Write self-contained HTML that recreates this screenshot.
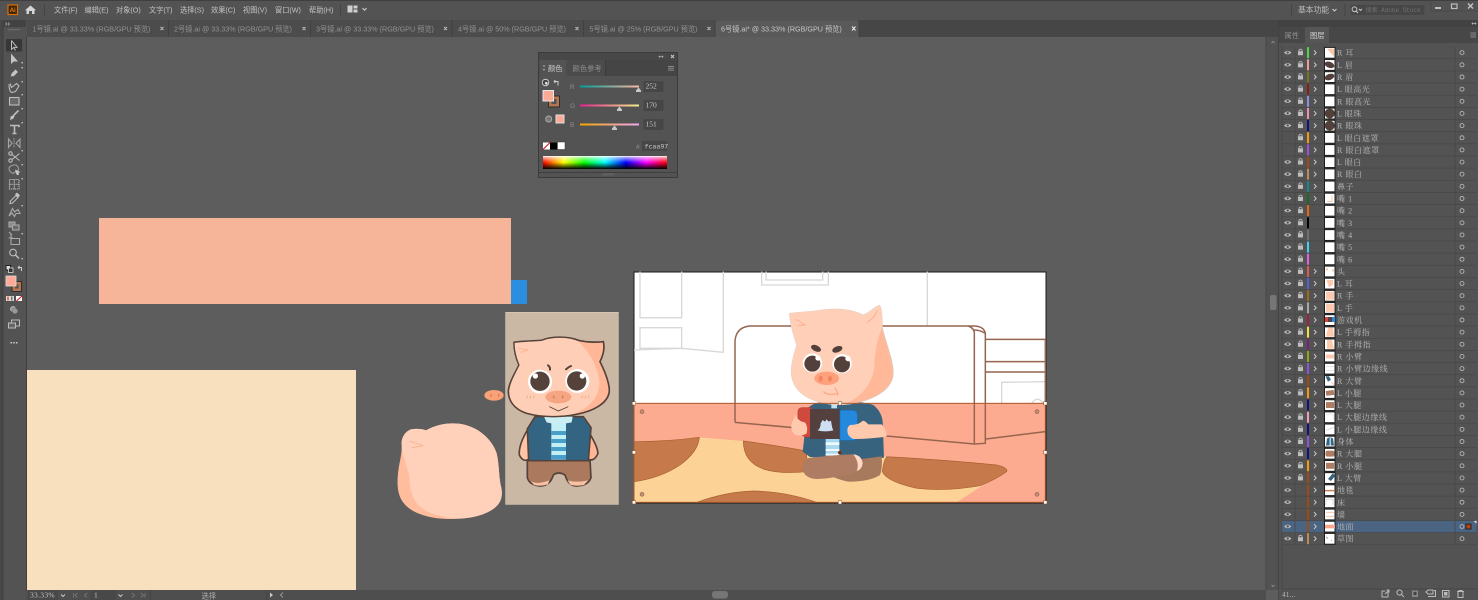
<!DOCTYPE html>
<html lang="zh"><head><meta charset="utf-8"><title>Illustrator</title>
<style>
html,body{margin:0;padding:0;width:1478px;height:600px;overflow:hidden;background:#5d5d5d}
svg{display:block;filter:blur(.3px)}
text{font-family:"Liberation Sans","Noto Sans CJK SC",sans-serif;fill:#b4b4b4;font-size:7.3px}
.m text{font-size:7.2px;fill:#c4c4c4}
.t text{font-size:7.2px;fill:#929292}
.l text{font-family:"Liberation Serif","Noto Serif CJK SC",serif;font-size:8px;fill:#b8b8b8;letter-spacing:.55px}
.ic{fill:none;stroke:#bcbcbc;stroke-width:1.1}
.f{fill:#c4c4c4;stroke:none}
</style></head><body>
<svg width="1478" height="600" viewBox="0 0 1478 600" xmlns="http://www.w3.org/2000/svg">
<defs>
<linearGradient id="gr"><stop offset="0" stop-color="#009c9c"/><stop offset="1" stop-color="#ffb8a0"/></linearGradient>
<linearGradient id="gg"><stop offset="0" stop-color="#e8208e"/><stop offset="1" stop-color="#f2f088"/></linearGradient>
<linearGradient id="gb"><stop offset="0" stop-color="#f5a500"/><stop offset="1" stop-color="#f0a8f4"/></linearGradient>
<linearGradient id="hue"><stop offset="0" stop-color="#f00"/><stop offset=".167" stop-color="#ff0"/><stop offset=".333" stop-color="#0f0"/><stop offset=".5" stop-color="#0ff"/><stop offset=".667" stop-color="#00f"/><stop offset=".833" stop-color="#f0f"/><stop offset="1" stop-color="#f00"/></linearGradient>
<linearGradient id="wb" x2="0" y2="1"><stop offset="0" stop-color="#fff"/><stop offset=".12" stop-color="#fff" stop-opacity=".6"/><stop offset=".5" stop-color="#fff" stop-opacity="0"/><stop offset=".5" stop-color="#000" stop-opacity="0"/><stop offset="1" stop-color="#000"/></linearGradient>
<g id="r"><path d="M1282 6.07H1476M1295 -6V6M1455 -6V6" stroke="#484848" stroke-width=".8" fill="none"/><circle cx="1462" cy="0" r="2" fill="none" stroke="#b5b5b5" stroke-width=".9"/></g>
<g id="e"><path d="M1284 0Q1287.7 -3.8 1291.4 0Q1287.7 3.4 1284 0Z" fill="#bdbdbd"/><circle cx="1287.7" cy="-.2" r="1.2" fill="#535353"/></g>
<g id="k"><rect x="1298" y="-1.5" width="5" height="4" fill="#bdbdbd"/><path d="M1299 -1.5V-2.6Q1300.5 -4.3 1302 -2.6V-1.5" fill="none" stroke="#bdbdbd" stroke-width=".9"/></g>
<path id="c" d="M1314 -2.3L1316.2 0L1314 2.3" fill="none" stroke="#c8c8c8" stroke-width="1"/>
<rect id="w" x="1324.5" y="-5.3" width="10.5" height="10.8" fill="#fff" stroke="#1c1c1c"/>
</defs>

<!-- base -->
<rect width="1478" height="600" fill="#5d5d5d"/>

<!-- artboard objects -->
<rect x="99" y="218" width="412" height="86" fill="#f6b599"/>
<rect x="511" y="280" width="16" height="24" fill="#2b8fe0"/>
<rect x="27" y="370" width="329" height="220" fill="#f8dfbe"/>

<!-- left pig group -->
<g transform="translate(390 305) scale(.33333)">
<rect x="347" y="22" width="338" height="576" fill="#cbb8a4" stroke="#d8cbbb" stroke-width="2"/>
<ellipse cx="312" cy="271" rx="29" ry="16" fill="#f9a177"/><ellipse cx="303" cy="271" rx="2.5" ry="5" fill="#d9825c"/><ellipse cx="326" cy="271" rx="2.5" ry="5" fill="#d9825c"/>
<path d="M35 420C33 395 50 372 72 372C85 371 98 372 108 376C140 358 175 353 205 356C260 362 305 400 320 445C328 480 326 510 332 540C340 570 335 590 315 608C285 632 235 643 180 642C120 642 65 625 42 595C20 570 20 530 26 490C30 465 36 445 35 420Z" fill="#ffbd9e"/>
<path d="M35 420C33 395 50 372 72 372C85 371 98 372 108 376C140 358 175 353 205 356C260 362 305 400 320 445C328 480 326 510 332 540C340 570 335 590 315 608C285 632 235 643 190 640C150 635 110 625 85 600C62 575 58 540 58 515C50 480 36 445 35 420Z" fill="#ffd1ba"/>
<path d="M57 408L100 422L66 428" fill="none" stroke="#fbb08c" stroke-width="2.5"/>
<!-- arms -->
<path d="M414 372Q385 420 388 450Q400 474 418 462L432 380Z" fill="#ffc3a6" stroke="#55423a" stroke-width="5"/>
<path d="M590 372Q622 420 624 445Q612 472 594 462L580 380Z" fill="#ffb596" stroke="#55423a" stroke-width="5"/>
<!-- pants -->
<path d="M412 465H600L603 518Q595 542 560 543Q535 543 525 510Q505 498 490 510Q480 543 450 543Q418 540 412 518Z" fill="#ab7a5e" stroke="#55423a" stroke-width="5"/>
<path d="M422 528Q440 540 478 526L474 538Q450 545 432 540ZM533 526Q560 534 594 526L582 540Q555 545 540 538Z" fill="#f9c1a4"/>
<!-- jacket -->
<path d="M412 372L435 335H580L603 368L595 467H416Z" fill="#336583" stroke="#55423a" stroke-width="5"/>
<rect x="484" y="345" width="44" height="119" fill="#c2eff6"/>
<path d="M484 378H528V390H484ZM484 402H528V414H484ZM484 426H528V438H484ZM484 450H528V463H484Z" fill="#4a9ec9"/>
<path d="M462 335H548L545 352L512 358L505 345L497 358L470 352Z" fill="#cbeef2"/>
<!-- head -->
<path d="M372 112C400 108 430 108 455 106C480 95 530 92 565 106C590 112 620 112 640 110C645 130 640 150 630 170C645 200 658 235 658 258C655 295 610 318 560 328C510 338 450 336 410 325C370 312 355 285 355 258C358 230 375 205 387 180C378 160 372 135 372 112Z" fill="#ffb797" stroke="#55423a" stroke-width="5"/>
<path d="M374 114C400 110 430 110 455 108C480 97 530 94 563 108C600 140 625 190 628 230C630 275 595 315 540 329C500 335 450 334 412 323C372 310 358 285 358 258C361 230 377 205 389 180C380 160 374 135 374 114Z" fill="#ffceb6"/>
<path d="M385 130L415 135L392 142" fill="none" stroke="#fbb08c" stroke-width="2.5"/>
<path d="M474 181Q481 186 480 194M543 183Q535 186 528 193" fill="none" stroke="#55423a" stroke-width="6" stroke-linecap="round"/>
<circle cx="450" cy="230" r="36" fill="#fff"/><circle cx="562" cy="228" r="36" fill="#fff"/>
<circle cx="450" cy="229" r="29" fill="#55423a"/><circle cx="560" cy="228" r="29" fill="#55423a"/>
<circle cx="436" cy="213" r="8" fill="#fff"/><circle cx="577" cy="213" r="8" fill="#fff"/>
<ellipse cx="505" cy="276" rx="39" ry="19" fill="#f6a583"/><ellipse cx="491" cy="276" rx="2.5" ry="5" fill="#d3805e"/><ellipse cx="518" cy="276" rx="2.5" ry="5" fill="#d3805e"/>
<path d="M478 305L505 318L535 305" fill="none" stroke="#55423a" stroke-width="2.5"/>
<path d="M413 272l-3 8M423 272l-3 8M433 272l-3 8M578 272l-3 8M588 272l-3 8M598 272l-3 8" stroke="#f29b78" stroke-width="2"/>
</g>

<!-- artboard scene -->
<rect x="634" y="272" width="412" height="231" fill="#fff" stroke="#1a1a1a" stroke-width="1"/>
<g transform="translate(630 265) scale(.33333)">
<g fill="none" stroke="#d8d8d8" stroke-width="4">
<path d="M30 20V158H155V20M280 20V262M12 255L155 250L280 262M30 188H155V250H30ZM395 20V60H595V20M408 20V45H578V20M892 20V182M1115 415V352L1245 350"/>
<path d="M1205 415Q1222 390 1240 415"/>
</g>
<rect x="12" y="415" width="1234" height="297" fill="#fdab90"/>
<path d="M12 600L208 517L340 528L520 555L770 575L1060 660L980 712H12Z" fill="#fdd296"/>
<g fill="#c67a4c" stroke="#a9602f" stroke-width="2">
<path d="M12 530Q110 530 208 517Q205 560 150 600Q90 640 12 650Z"/>
<path d="M340 528Q430 540 530 558L530 620Q450 628 400 612Q340 590 340 528Z"/>
<path d="M770 575Q950 585 1100 600Q1135 608 1130 620Q1095 645 1050 662Q950 680 860 670Q770 650 757 620Q760 590 770 575Z"/>
<path d="M200 712Q290 680 370 678Q470 680 560 712Z"/>
</g>
<g fill="none" stroke="#96654f" stroke-width="4.5">
<path d="M315 472V228Q318 188 358 183H1035Q1062 185 1066 205V535L1033 537L315 472"/>
<path d="M1015 183Q1033 190 1033 205V537M1033 195Q1050 195 1066 205"/>
<path d="M1066 223H1246M1066 290H1246M1066 321H1246M1246 223V415M1068 522L1246 500"/>
</g>
<!-- pig: body -->
<path d="M535 428Q560 405 610 412Q690 405 730 420Q755 440 758 470L762 578L700 586L540 576L518 560L525 500Z" fill="#38637f"/>
<rect x="604" y="418" width="17" height="12" fill="#bfe3f0"/>
<rect x="587" y="520" width="41" height="52" fill="#a9d9ee"/><path d="M587 532H628V540H587ZM587 552H628V558H587ZM587 566H628V572H587Z" fill="#f1fafd"/>
<!-- legs -->
<path d="M695 582L755 574Q758 610 750 630Q720 650 655 650Q630 645 610 636L680 618Z" fill="#a7795d"/>
<path d="M530 580Q600 570 665 568Q695 570 698 595Q695 615 675 622Q620 640 560 642Q525 640 518 615Q516 595 530 580Z" fill="#ad7c63"/>
<path d="M670 568Q695 570 698 595Q695 615 680 618Q690 595 670 568Z" fill="#ffd9c6"/>
<circle cx="629" cy="563" r="5" fill="#7a2a0a"/>
<!-- head -->
<path d="M478 145C520 140 540 140 560 137C610 128 660 130 700 150C715 145 735 125 748 120C755 125 757 160 757 185C765 230 790 280 790 325C788 370 740 405 660 417C600 425 530 410 500 370C478 340 478 310 500 240C490 210 480 170 478 145Z" fill="#ffb998" stroke="#d8cfca" stroke-width="2"/>
<path d="M478 145C520 140 540 140 560 137C610 128 660 130 700 150C715 145 735 125 748 120C755 125 757 160 757 185C745 215 735 250 733 300C730 350 700 395 640 419C600 422 530 410 500 370C478 340 478 310 500 240C490 210 480 170 478 145Z" fill="#ffcfb8"/>
<path d="M498 163L525 180L505 181M742 135Q735 160 710 172" fill="none" stroke="#ffa988" stroke-width="2.5"/>
<ellipse cx="558" cy="250" rx="16" ry="9" fill="#53403a" transform="rotate(25 558 250)"/><ellipse cx="622" cy="253" rx="16" ry="9" fill="#53403a" transform="rotate(-20 622 253)"/>
<circle cx="547" cy="294" r="29" fill="#fff"/><circle cx="636" cy="296" r="29" fill="#fff"/>
<circle cx="547" cy="296" r="24" fill="#53403a"/><circle cx="636" cy="298" r="24" fill="#53403a"/>
<circle cx="564" cy="279" r="8" fill="#fff"/><circle cx="654" cy="281" r="8" fill="#fff"/>
<ellipse cx="590" cy="340" rx="37" ry="20" fill="#ffa07d"/><ellipse cx="572" cy="341" rx="6" ry="9" fill="#ee8660"/><ellipse cx="600" cy="341" rx="6" ry="9" fill="#ee8660"/>
<path d="M580 380Q600 395 625 384M614 368Q624 380 623 392" fill="none" stroke="#ffa07a" stroke-width="3"/>
<!-- switch -->
<path d="M515 428H545V516H530Q506 510 504 490V440Q504 430 515 428Z" fill="#d0493e" stroke="#b03c33" stroke-width="2"/>
<rect x="540" y="432" width="92" height="90" fill="#54403e"/>
<path d="M630 436H670Q682 438 682 450V510Q680 525 668 526H630Z" fill="#2488dc" stroke="#1c6fb8" stroke-width="2"/>
<path d="M563 496Q572 490 572 475L578 465L585 470L590 463L596 470L603 467Q606 490 610 496Q585 502 563 496Z" fill="#cfe0f2"/>
<!-- hands -->
<path d="M497 450Q505 470 525 472Q535 485 530 505Q515 515 495 510Q480 495 485 475Z" fill="#ffc9ae"/>
<path d="M660 480Q685 480 695 470Q700 462 715 478L755 478Q770 495 770 515Q720 522 670 522Q652 515 652 497Q652 485 660 480Z" fill="#ffc9ae"/>
<!-- selection -->
<rect x="12" y="415" width="1234" height="297" fill="none" stroke="#a95a2a" stroke-width="3"/>
<g fill="#c18c72" stroke="#8a5a3e" stroke-width="1.6"><circle cx="36" cy="440" r="6"/><circle cx="1221" cy="440" r="6"/><circle cx="36" cy="688" r="6"/><circle cx="1221" cy="688" r="6"/></g>
<g fill="#fff" stroke="#8a4a20" stroke-width="1.5"><rect x="7" y="410" width="10" height="10"/><rect x="625" y="410" width="10" height="10"/><rect x="1241" y="410" width="10" height="10"/><rect x="7" y="557" width="10" height="10"/><rect x="1241" y="557" width="10" height="10"/><rect x="7" y="707" width="10" height="10"/><rect x="625" y="707" width="10" height="10"/><rect x="1241" y="707" width="10" height="10"/></g>
</g>

<!-- top chrome -->
<rect width="1478" height="20" fill="#535353"/><rect width="1478" height=".8" fill="#3a3a3a"/>
<rect x="8" y="5" width="9.5" height="9.5" fill="#3a2408" stroke="#d9700a" stroke-width="1.2"/>
<text x="9.7" y="12.2" style="font-size:6px;fill:#e8830e;font-weight:bold">Ai</text>
<path d="M30.5 5.5L36 10.3H34.5V14H32V11H29V14H26.5V10.3H25Z" fill="#d6d6d6"/>
<path d="M44.5 4V16" stroke="#454545"/>
<g class="m"><text x="54" y="12.3">文件(F)</text><text x="84.5" y="12.3">编辑(E)</text><text x="116" y="12.3">对象(O)</text><text x="149" y="12.3">文字(T)</text><text x="180" y="12.3">选择(S)</text><text x="211" y="12.3">效果(C)</text><text x="243" y="12.3">视图(V)</text><text x="275" y="12.3">窗口(W)</text><text x="309" y="12.3">帮助(H)</text></g>
<path d="M340.5 4V16" stroke="#454545"/>
<path d="M347.5 5.5h5v7h-5zM353.5 5.5h4v3h-4zM353.5 9.5h4v3h-4z" fill="#cfcfcf"/>
<path d="M362.5 8.2L364.5 10.2L366.5 8.2" fill="none" stroke="#c8c8c8" stroke-width="1.1"/>
<!-- right top -->
<path d="M1291.5 4V16M1345 4V16" stroke="#454545"/>
<text x="1298" y="12.3" style="fill:#bcbcbc;font-size:7.8px">基本功能</text>
<path d="M1332.5 9L1334.5 11L1336.5 9" fill="none" stroke="#c8c8c8" stroke-width="1.1"/>
<rect x="1350.5" y="5" width="74" height="10" rx="1" fill="#474747"/>
<circle cx="1354.5" cy="9.3" r="2.4" fill="none" stroke="#c8c8c8"/><path d="M1356.2 11L1358 13M1359 9L1360.5 10.5L1362 9" fill="none" stroke="#c8c8c8"/>
<text x="1365.5" y="11.8" style="font-family:'Liberation Mono','Noto Sans CJK SC',monospace;font-size:6px;fill:#707070">搜索 Adobe Stock</text>
<path d="M1431 0V11H1478" fill="none" stroke="#484848"/>
<rect x="1435" y="7" width="6" height="2" fill="#bdbdbd"/>
<rect x="1451.5" y="4" width="5.5" height="4.5" fill="none" stroke="#bdbdbd" stroke-width="1.2"/>
<path d="M1468 3.5L1473 8.5M1473 3.5L1468 8.5" stroke="#c8c8c8" stroke-width="1.3"/>

<!-- tab bar -->
<rect y="20" width="1478" height="17" fill="#464646"/>
<rect x="27" y="20" width="832" height="17" fill="#4c4c4c"/>
<rect x="715" y="20.5" width="144" height="16.5" fill="#5a5a5a"/>
<path d="M168.5 20V37M310.5 20V37M452 20V37M583.5 20V37M715 20V37M859 20V37" stroke="#3f3f3f" stroke-width=".8"/>
<g class="t"><text x="32.5" y="31.5">1号镜.ai @ 33.33% (RGB/GPU 预览)</text><text x="174" y="31.5">2号镜.ai @ 33.33% (RGB/GPU 预览)</text><text x="316" y="31.5">3号镜.ai @ 33.33% (RGB/GPU 预览)</text><text x="458" y="31.5">4号镜.ai @ 50% (RGB/GPU 预览)</text><text x="589.5" y="31.5">5号镜.ai @ 25% (RGB/GPU 预览)</text><text x="721" y="31.5" style="fill:#c8c8c8">6号镜.ai* @ 33.33% (RGB/GPU 预览)</text></g>
<g stroke="#bdbdbd" stroke-width="1"><path d="M160.5 27L163.5 30M163.5 27L160.5 30M302.5 27L305.5 30M305.5 27L302.5 30M444 27L447 30M447 27L444 30M575.5 27L578.5 30M578.5 27L575.5 30M707.5 27L710.5 30M710.5 27L707.5 30"/><path d="M852 26.5L855.5 30.5M855.5 26.5L852 30.5" stroke="#eee"/></g>

<!-- left toolbar -->
<rect y="20" width="27" height="580" fill="#535353"/>
<rect x="0" y="20" width="2.6" height="580" fill="#484848"/><rect x="2.6" y="20" width=".8" height="580" fill="#3c3c3c"/><rect x="26" y="37" width="1" height="553" fill="#3f3f3f"/>
<rect x="3.4" y="20" width="22.6" height="7" fill="#424242"/>
<path d="M5.5 22.5L7 24L5.5 25.5M8 22.5L9.5 24L8 25.5" stroke="#bbb" fill="none" stroke-width=".7"/>
<rect x="8" y="29" width="12" height="1.2" fill="#6a6a6a"/>
<rect x="6" y="39" width="16" height="12.5" rx="1" fill="#373737"/>
<g class="ic">
<path d="M11.5 40.5V49.5L13.8 47.4L15.5 50.5M13.8 47.4H17L11.5 40.5" stroke-width="1"/>
<path class="f" d="M11 53.5V64L13.8 61.5H18Z"/>
<path d="M10.5 78L11.5 73.5L15.5 69.5L18 72L14 76Z" class="f"/><path d="M10 78.5L12.5 76" stroke="#535353"/>
<path d="M9 84Q9 91 11.5 92.5L15.5 91.5L19 86L16.5 83.5L11.5 87.5Q10.5 86 10.5 83.5" />
<rect x="9.5" y="97.5" width="9.5" height="7.5" fill="#6a6a6a" stroke="#bcbcbc"/>
<path d="M18.5 110.5L13.5 115.5" stroke-width="1.6"/><path class="f" d="M10 120L10.8 116.3L13.5 115.3L14.5 116.5L13.2 118.8Z"/>
<path d="M10 125.5H19V127.3M14.5 125.5V133.5M12.5 133.5H16.5" stroke-width="1.6"/>
<path d="M8.5 139V147.5L12 143.2ZM20 139V147.5L16 143.2Z" stroke="#a5a5a5"/><path d="M14 138.5V148" stroke-dasharray="1.3 1" stroke="#a5a5a5"/>
<circle cx="10.5" cy="153.5" r="1.7"/><circle cx="10.5" cy="160.5" r="1.7"/><path d="M12 154.5L19.5 160.5M12 159.5L19.5 153.5"/>
<path d="M9 168Q11 164.5 16 165Q19 167 18.5 170L13 173.5Q9 172 9 168Z" stroke="#999"/><path class="f" d="M15 169.5L20.5 172L18.5 173L19 175L17 175L16 173.5Z"/>
<rect x="9.5" y="179.5" width="9.5" height="9.5" stroke-dasharray="1.2 .8"/><path d="M9.5 184.3H19M14.3 179.5V189" stroke-dasharray="1.2 .8"/>
<path d="M10 203.5L10.5 201L16 195.5L18 197.5L12.5 203Z"/><path class="f" d="M15 194.5L17 192.5L20 195.5L18 197.5Z"/>
<path d="M9 216L12.5 208.5L14.5 212L18 209.5L20 213.5L16 213.5L14.5 216.5L12 213Z" stroke="#aaa"/>
<rect x="9" y="222" width="6" height="5" fill="#888" stroke="#aaa"/><rect x="12.5" y="225" width="6.5" height="5" fill="#6a6a6a" stroke="#aaa"/>
<path d="M11 233.5V244.5H19.5V238.5H11M8.5 238H13M12 235L9 232" stroke="#aaa"/>
<circle cx="13" cy="252.5" r="3.3"/><path d="M15.5 255L19 258.5" stroke-width="1.5"/>
</g>
<g fill="#c8c8c8"><path d="M21.5 67h1.4v1.4h-1.4zM21.5 81h1.4v1.4h-1.4zM21.5 94h1.4v1.4h-1.4zM21.5 108h1.4v1.4h-1.4zM21.5 122h1.4v1.4h-1.4zM21.5 150h1.4v1.4h-1.4zM21.5 164h1.4v1.4h-1.4zM21.5 178h1.4v1.4h-1.4zM21.5 205h1.4v1.4h-1.4zM21.5 233h1.4v1.4h-1.4zM21.5 258h1.4v1.4h-1.4zM21.5 62h1.4v1.4h-1.4z"/></g>
<rect x="6" y="265.5" width="4.5" height="4.5" fill="#ddd" stroke="#222"/><rect x="8.5" y="268" width="4.5" height="4.5" fill="#333" stroke="#ddd" stroke-width=".8"/>
<path d="M18 267.5H21.5V271M18 267.5L19.5 266M18 267.5L19.5 269" fill="none" stroke="#ccc"/>
<rect x="11.5" y="281" width="10.5" height="11" fill="#2f2f2f"/><rect x="12.5" y="282" width="8.5" height="9" fill="#b5754f"/><rect x="15" y="284.5" width="3.5" height="4" fill="#535353"/>
<rect x="6" y="276" width="10" height="10" fill="#fdaa97" stroke="#ddd" stroke-width=".8"/>
<rect x="6" y="296" width="8" height="5" fill="#d9d9d9"/><path d="M7 296.5h2v4H7z" fill="#e27b5a"/><path d="M11 296.5h1.5v4H11z" fill="#777"/>
<rect x="16" y="296" width="6" height="5" fill="#fff"/><path d="M16.5 301L22 296" stroke="#e01010"/>
<circle cx="13" cy="309" r="2.6" fill="#999" stroke="#ddd" stroke-width=".5"/><circle cx="15" cy="311" r="2.6" fill="#999" stroke="#777" stroke-width=".5"/>
<rect x="11.5" y="320" width="8" height="6" fill="none" stroke="#bbb"/><rect x="8.5" y="323" width="7" height="5" fill="#666" stroke="#bbb"/>
<path d="M10.5 342h1.5v1.5h-1.5zM13.2 342h1.5v1.5h-1.5zM15.9 342h1.5v1.5h-1.5z" fill="#ccc"/>

<!-- color panel -->
<rect x="538.5" y="52.5" width="139" height="125" fill="#535353" stroke="#3b3b3b"/>
<rect x="539" y="53" width="138" height="7" fill="#484848"/>
<rect x="539" y="60" width="138" height="16" fill="#454545"/>
<rect x="539.3" y="60" width="27.3" height="16" fill="#535353"/>
<rect x="567" y="60" width="38" height="16" fill="#4b4b4b"/>
<path d="M605.5 60V76" stroke="#3e3e3e"/>
<path d="M659 56.7H663M659.8 55.7L659 56.7L659.8 57.7M662.2 55.7L663 56.7L662.2 57.7" fill="none" stroke="#bbb" stroke-width=".7"/>
<path d="M671 55L674 58M674 55L671 58" stroke="#ccc"/>
<path d="M543 66.5L544 65.5L545 66.5M543 69L544 70L545 69" fill="none" stroke="#bbb" stroke-width=".7"/>
<text x="548" y="71" style="fill:#d0d0d0">颜色</text><text x="572.5" y="71" style="fill:#8e8e8e">颜色参考</text>
<path d="M668 66.5H674M668 68.3H674M668 70.1H674" stroke="#8a8a8a"/>
<circle cx="545.5" cy="82.5" r="3.3" fill="#444" stroke="#ddd" stroke-width=".8"/><circle cx="546.3" cy="83.3" r="1.4" fill="#ddd"/>
<path d="M554 81.5H558V85.5M554 81.5L555.4 80M554 81.5L555.4 83" fill="none" stroke="#ccc"/>
<rect x="548.5" y="96" width="11" height="11" fill="#b5754f" stroke="#2f2f2f"/><rect x="551.5" y="99" width="5" height="5" fill="#535353"/>
<rect x="543" y="90.5" width="10.5" height="10.5" fill="#fdaa97" stroke="#e8e8e8"/>
<circle cx="548.7" cy="119" r="3" fill="#777" stroke="#aaa"/>
<rect x="556" y="115" width="8" height="8" fill="#fdaa97" stroke="#e0e0e0"/>
<text x="570" y="89" style="fill:#8f8f8f;font-size:6.5px">R</text><text x="570" y="108" style="fill:#8f8f8f;font-size:6.5px">G</text><text x="570" y="127" style="fill:#8f8f8f;font-size:6.5px">B</text>
<rect x="580" y="85.5" width="59" height="2" fill="url(#gr)"/><rect x="580" y="104.5" width="59" height="2" fill="url(#gg)"/><rect x="580" y="123.5" width="59" height="2" fill="url(#gb)"/>
<path d="M638.5 87.5L641 90.5V92H636V90.5ZM619.5 106.5L622 109.5V111H617V109.5ZM614.5 125.5L617 128.5V130H612V128.5Z" fill="#c8c8c8"/>
<rect x="643.5" y="81" width="20" height="11" rx="1" fill="#464646"/><rect x="643.5" y="100" width="20" height="11" rx="1" fill="#464646"/><rect x="643.5" y="119" width="20" height="11" rx="1" fill="#464646"/>
<text x="645.5" y="88.5" style="font-family:'Liberation Serif',serif;font-size:7.5px;fill:#c8c8c8">252</text><text x="645.5" y="107.5" style="font-family:'Liberation Serif',serif;font-size:7.5px;fill:#c8c8c8">170</text><text x="645.5" y="126.5" style="font-family:'Liberation Serif',serif;font-size:7.5px;fill:#c8c8c8">151</text>
<text x="636" y="149" style="font-size:6.5px;fill:#999">#</text>
<rect x="642" y="141" width="25" height="10" rx="1" fill="#464646"/>
<text x="644.5" y="148.5" style="font-family:'Liberation Mono',monospace;font-size:6.6px;fill:#c8c8c8">fcaa97</text>
<rect x="543" y="142.5" width="7" height="7" fill="#fff"/><path d="M543 149.5L550 142.5" stroke="#e01010" stroke-width="1.1"/>
<rect x="550" y="142.5" width="7" height="7" fill="#000"/><rect x="557.5" y="142" width="7.5" height="7.5" fill="#fff" stroke="#333" stroke-width=".5"/>
<rect x="543" y="156" width="124" height="13" fill="url(#hue)"/><rect x="543" y="156" width="124" height="13" fill="url(#wb)"/>
<path d="M539 172.5H677" stroke="#3f3f3f"/><rect x="602" y="173" width="12" height="2.5" fill="#5f5f5f"/>

<!-- right dock scrollbar region -->
<rect x="1266" y="37" width="12" height="553" fill="#525252"/>
<path d="M1266 37V590" stroke="#484848"/>
<rect x="1270" y="295" width="6.5" height="15" rx="2" fill="#767676"/>
<path d="M1271.5 43L1273 41.5L1274.5 43M1271.5 585L1273 586.5L1274.5 585" fill="none" stroke="#999" stroke-width=".8"/>

<!-- right panel -->
<rect x="1278" y="20" width="200" height="580" fill="#535353"/><rect x="1278" y="20" width=".8" height="580" fill="#3e3e3e"/>
<rect x="1278.5" y="20" width="199.5" height="7" fill="#424242"/>
<rect x="1278.5" y="27" width="199.5" height="16" fill="#474747"/>
<rect x="1305" y="27" width="24" height="16" fill="#565656"/>
<text x="1284.5" y="38" style="fill:#8e8e8e">属性</text><text x="1310" y="38" style="fill:#d0d0d0">图层</text>
<path d="M1472 23.5H1476M1472.7 22.5L1472 23.5L1472.7 24.5M1475.3 22.5L1476 23.5L1475.3 24.5" fill="none" stroke="#bbb" stroke-width=".7"/>
<path d="M1470.5 33H1476M1470.5 35H1476M1470.5 37H1476" stroke="#8a8a8a"/>
<path d="M1282 46V590" stroke="#474747"/>
<rect x="1282" y="520.6" width="194.5" height="12" fill="#4a6482"/>
<path d="M1473.5 520.8H1476.5V523.8Z" fill="#e6e6e6"/>

<g class="l">
<g transform="translate(0 52.7)"><use href="#r"/><use href="#e"/><use href="#k"/><rect x="1307" y="-5.5" width="2" height="11" fill="#4bd94b"/><use href="#c"/><use href="#w"/><path d="M1327 -4H1334V4Z" fill="#fbc5a6"/><text x="1337" y="3">R 耳</text></g>
<g transform="translate(0 64.85)"><use href="#r"/><use href="#e"/><use href="#k"/><rect x="1307" y="-5.5" width="2" height="11" fill="#f09a9a"/><use href="#c"/><use href="#w"/><ellipse cx="1329.5" cy="0" rx="5" ry="3" fill="#53403a" transform="rotate(20 1329.5 0)"/><text x="1337" y="3">L 眉</text></g>
<g transform="translate(0 77)"><use href="#r"/><use href="#e"/><use href="#k"/><rect x="1307" y="-5.5" width="2" height="11" fill="#7a7420"/><use href="#c"/><use href="#w"/><ellipse cx="1329.5" cy="0" rx="5" ry="3" fill="#53403a" transform="rotate(-20 1329.5 0)"/><text x="1337" y="3">R 眉</text></g>
<g transform="translate(0 89.15)"><use href="#r"/><use href="#e"/><use href="#k"/><rect x="1307" y="-5.5" width="2" height="11" fill="#8e1a10"/><use href="#c"/><use href="#w"/><text x="1337" y="3">L 眼高光</text></g>
<g transform="translate(0 101.3)"><use href="#r"/><use href="#e"/><use href="#k"/><rect x="1307" y="-5.5" width="2" height="11" fill="#8f8fe0"/><use href="#c"/><use href="#w"/><text x="1337" y="3">R 眼高光</text></g>
<g transform="translate(0 113.45)"><use href="#r"/><use href="#e"/><use href="#k"/><rect x="1307" y="-5.5" width="2" height="11" fill="#f090b0"/><use href="#c"/><use href="#w"/><circle cx="1329.7" cy="0" r="5" fill="#53403a"/><text x="1337" y="3">L 眼珠</text></g>
<g transform="translate(0 125.6)"><use href="#r"/><use href="#e"/><use href="#k"/><rect x="1307" y="-5.5" width="2" height="11" fill="#10107e"/><use href="#c"/><use href="#w"/><circle cx="1329.7" cy="0" r="5" fill="#53403a"/><text x="1337" y="3">R 眼珠</text></g>
<g transform="translate(0 137.75)"><use href="#r"/><use href="#k"/><rect x="1307" y="-5.5" width="2" height="11" fill="#f39a0e"/><use href="#c"/><use href="#w"/><text x="1337" y="3">L 眼白遮罩</text></g>
<g transform="translate(0 149.9)"><use href="#r"/><use href="#k"/><rect x="1307" y="-5.5" width="2" height="11" fill="#9b50e0"/><use href="#c"/><use href="#w"/><text x="1337" y="3">R 眼白遮罩</text></g>
<g transform="translate(0 162.05)"><use href="#r"/><use href="#e"/><use href="#k"/><rect x="1307" y="-5.5" width="2" height="11" fill="#a04a12"/><use href="#c"/><use href="#w"/><text x="1337" y="3">L 眼白</text></g>
<g transform="translate(0 174.2)"><use href="#r"/><use href="#e"/><use href="#k"/><rect x="1307" y="-5.5" width="2" height="11" fill="#b98c5a"/><use href="#c"/><use href="#w"/><text x="1337" y="3">R 眼白</text></g>
<g transform="translate(0 186.35)"><use href="#r"/><use href="#e"/><use href="#k"/><rect x="1307" y="-5.5" width="2" height="11" fill="#108a90"/><use href="#c"/><use href="#w"/><text x="1337" y="3">鼻子</text></g>
<g transform="translate(0 198.5)"><use href="#r"/><use href="#e"/><use href="#k"/><rect x="1307" y="-5.5" width="2" height="11" fill="#1a6a20"/><use href="#c"/><use href="#w"/><path d="M1327 3H1332V-3" fill="none" stroke="#fbc5a6"/><text x="1337" y="3">嘴 1</text></g>
<g transform="translate(0 210.65)"><use href="#r"/><use href="#e"/><use href="#k"/><rect x="1307" y="-5.5" width="2" height="11" fill="#e66a10"/><use href="#w"/><text x="1337" y="3">嘴 2</text></g>
<g transform="translate(0 222.8)"><use href="#r"/><use href="#e"/><use href="#k"/><rect x="1307" y="-5.5" width="2" height="11" fill="#000"/><use href="#w"/><text x="1337" y="3">嘴 3</text></g>
<g transform="translate(0 234.95)"><use href="#r"/><use href="#e"/><use href="#k"/><rect x="1307" y="-5.5" width="2" height="11" fill="#707070"/><use href="#w"/><text x="1337" y="3">嘴 4</text></g>
<g transform="translate(0 247.1)"><use href="#r"/><use href="#e"/><use href="#k"/><rect x="1307" y="-5.5" width="2" height="11" fill="#40d0f0"/><use href="#w"/><text x="1337" y="3">嘴 5</text></g>
<g transform="translate(0 259.25)"><use href="#r"/><use href="#e"/><use href="#k"/><rect x="1307" y="-5.5" width="2" height="11" fill="#e060e0"/><use href="#w"/><text x="1337" y="3">嘴 6</text></g>
<g transform="translate(0 271.4)"><use href="#r"/><use href="#e"/><use href="#k"/><rect x="1307" y="-5.5" width="2" height="11" fill="#e05a4a"/><use href="#c"/><use href="#w"/><path d="M1326 -3h2v2h-2zM1332 -2h2v2h-2z" fill="#fbc5a6"/><text x="1337" y="3">头</text></g>
<g transform="translate(0 283.55)"><use href="#r"/><use href="#e"/><use href="#k"/><rect x="1307" y="-5.5" width="2" height="11" fill="#5060e0"/><use href="#c"/><use href="#w"/><path d="M1326.5 -3.5H1333V1L1329 4Z" fill="#fdc9ae"/><text x="1337" y="3">L 耳</text></g>
<g transform="translate(0 295.7)"><use href="#r"/><use href="#e"/><use href="#k"/><rect x="1307" y="-5.5" width="2" height="11" fill="#a06a10"/><use href="#c"/><use href="#w"/><rect x="1326" y="-4" width="8" height="8" fill="#fdc9ae"/><text x="1337" y="3">R 手</text></g>
<g transform="translate(0 307.85)"><use href="#r"/><use href="#e"/><use href="#k"/><rect x="1307" y="-5.5" width="2" height="11" fill="#a8a8a8"/><use href="#c"/><use href="#w"/><rect x="1326" y="-4" width="8" height="8" fill="#fdc9ae"/><text x="1337" y="3">L 手</text></g>
<g transform="translate(0 320)"><use href="#r"/><use href="#e"/><use href="#k"/><rect x="1307" y="-5.5" width="2" height="11" fill="#a02040"/><use href="#c"/><use href="#w"/><rect x="1325" y="-3" width="3" height="5" fill="#d0493e"/><rect x="1328" y="-3" width="4" height="5" fill="#54403e"/><rect x="1332" y="-3" width="3" height="5" fill="#2488dc"/><text x="1337" y="3">游戏机</text></g>
<g transform="translate(0 332.15)"><use href="#r"/><use href="#e"/><use href="#k"/><rect x="1307" y="-5.5" width="2" height="11" fill="#f0e040"/><use href="#c"/><use href="#w"/><path d="M1328 -4.5H1333L1334 4.5H1326Z" fill="#fdc9ae"/><text x="1337" y="3">L 手拇指</text></g>
<g transform="translate(0 344.3)"><use href="#r"/><use href="#e"/><use href="#k"/><rect x="1307" y="-5.5" width="2" height="11" fill="#7a1f80"/><use href="#c"/><use href="#w"/><path d="M1327 -4.5H1332L1334 4.5H1327Z" fill="#fdc9ae"/><text x="1337" y="3">R 手拇指</text></g>
<g transform="translate(0 356.45)"><use href="#r"/><use href="#e"/><use href="#k"/><rect x="1307" y="-5.5" width="2" height="11" fill="#8aaa10"/><use href="#c"/><use href="#w"/><rect x="1326" y="-2" width="8" height="4" fill="#fdc9ae"/><text x="1337" y="3">R 小臂</text></g>
<g transform="translate(0 368.6)"><use href="#r"/><use href="#e"/><use href="#k"/><rect x="1307" y="-5.5" width="2" height="11" fill="#9050e0"/><use href="#c"/><use href="#w"/><path d="M1326 -2H1334M1326 2H1334" stroke="#e8d8d0" stroke-width=".7"/><text x="1337" y="3">R 小臂边缘线</text></g>
<g transform="translate(0 380.75)"><use href="#r"/><use href="#e"/><use href="#k"/><rect x="1307" y="-5.5" width="2" height="11" fill="#a04a12"/><use href="#c"/><use href="#w"/><path d="M1325.5 -4.5H1329L1331 -1L1328 1Z" fill="#38637f"/><path d="M1331 1L1334 4" stroke="#fdc9ae"/><text x="1337" y="3">R 大臂</text></g>
<g transform="translate(0 392.9)"><use href="#r"/><use href="#e"/><use href="#k"/><rect x="1307" y="-5.5" width="2" height="11" fill="#f39a0e"/><use href="#c"/><use href="#w"/><rect x="1326" y="-2.5" width="8" height="5" fill="#ad7c63" transform="rotate(-8 1330 0)"/><text x="1337" y="3">L 小腿</text></g>
<g transform="translate(0 405.05)"><use href="#r"/><use href="#e"/><use href="#k"/><rect x="1307" y="-5.5" width="2" height="11" fill="#10107e"/><use href="#c"/><use href="#w"/><rect x="1326" y="-3" width="8" height="6" fill="#ad7c63"/><text x="1337" y="3">L 大腿</text></g>
<g transform="translate(0 417.2)"><use href="#r"/><use href="#e"/><use href="#k"/><rect x="1307" y="-5.5" width="2" height="11" fill="#f29bc0"/><use href="#c"/><use href="#w"/><path d="M1326.5 -3H1333L1334 3" fill="none" stroke="#ddd" stroke-width=".7"/><text x="1337" y="3">L 大腿边缘线</text></g>
<g transform="translate(0 429.35)"><use href="#r"/><use href="#e"/><use href="#k"/><rect x="1307" y="-5.5" width="2" height="11" fill="#10107e"/><use href="#c"/><use href="#w"/><path d="M1326 1L1334 -2" fill="none" stroke="#ccc" stroke-width=".7"/><text x="1337" y="3">L 小腿边缘线</text></g>
<g transform="translate(0 441.5)"><use href="#r"/><use href="#e"/><use href="#k"/><rect x="1307" y="-5.5" width="2" height="11" fill="#9050e0"/><use href="#c"/><use href="#w"/><path d="M1326 4L1327 -3L1330 -4.5L1333 -3L1334 4Z" fill="#38637f"/><rect x="1329.5" y="-4" width="1.5" height="8" fill="#a9d9ee"/><text x="1337" y="3">身体</text></g>
<g transform="translate(0 453.65)"><use href="#r"/><use href="#e"/><use href="#k"/><rect x="1307" y="-5.5" width="2" height="11" fill="#10107e"/><use href="#c"/><use href="#w"/><rect x="1325.5" y="-3" width="9" height="6" rx="2" fill="#ad7c63"/><text x="1337" y="3">R 大腿</text></g>
<g transform="translate(0 465.8)"><use href="#r"/><use href="#e"/><use href="#k"/><rect x="1307" y="-5.5" width="2" height="11" fill="#f39a0e"/><use href="#c"/><use href="#w"/><rect x="1326" y="-3" width="8" height="6" fill="#ad7c63"/><text x="1337" y="3">R 小腿</text></g>
<g transform="translate(0 477.95)"><use href="#r"/><use href="#e"/><use href="#k"/><rect x="1307" y="-5.5" width="2" height="11" fill="#a04a12"/><use href="#c"/><use href="#w"/><path d="M1333 -5L1335 -2L1331 3L1328 1Z" fill="#38637f"/><text x="1337" y="3">L 大臂</text></g>
<g transform="translate(0 490.1)"><use href="#r"/><use href="#e"/><rect x="1307" y="-5.5" width="2" height="11" fill="#a04a12"/><use href="#c"/><use href="#w"/><path d="M1325 .5H1335" stroke="#c67a4c" stroke-width="1.4"/><text x="1337" y="3">地毯</text></g>
<g transform="translate(0 502.25)"><use href="#r"/><use href="#e"/><rect x="1307" y="-5.5" width="2" height="11" fill="#a04a12"/><use href="#c"/><use href="#w"/><path d="M1326 3V-3H1333V3" fill="none" stroke="#ccc" stroke-width=".7"/><text x="1337" y="3">床</text></g>
<g transform="translate(0 514.4)"><use href="#r"/><use href="#e"/><rect x="1307" y="-5.5" width="2" height="11" fill="#a04a12"/><use href="#c"/><use href="#w"/><path d="M1326 -2H1334M1326 2H1334" stroke="#fbc5a6"/><text x="1337" y="3">墙</text></g>
<g transform="translate(0 526.55)"><use href="#r"/><use href="#e"/><rect x="1307" y="-5.5" width="2" height="11" fill="#a04a12"/><use href="#c"/><use href="#w"/><rect x="1325" y="-1.8" width="10" height="3.6" fill="#fba68c"/><rect x="1466" y="-2.5" width="5" height="5" fill="#b5420f" stroke="#222"/><text x="1337" y="3">地面</text></g>
<g transform="translate(0 538.7)"><use href="#r"/><use href="#e"/><use href="#k"/><rect x="1307" y="-5.5" width="2" height="11" fill="#b98c5a"/><use href="#c"/><use href="#w"/><path d="M1326 -2L1328 0M1331 2h1" stroke="#888" stroke-width=".7"/><text x="1337" y="3">草图</text></g>
</g>

<!-- panel footer -->
<rect x="1278.5" y="589" width="199.5" height="11" fill="#535353"/><path d="M1282 589H1478" stroke="#474747"/>
<text x="1282" y="597" style="font-family:'Liberation Serif',serif;font-size:7.5px;fill:#b5b5b5">41...</text>
<g fill="none" stroke="#bbb" stroke-width="1">
<path d="M1388 592V597H1382V591H1385M1385 594L1389 590M1386.5 590H1389V592.5"/>
<circle cx="1399.5" cy="592.5" r="2.6"/><path d="M1401.5 594.5L1404 597"/>
<rect x="1412" y="590.5" width="6" height="6.5" fill="#888" stroke="none"/><circle cx="1415" cy="593.5" r="1.7" fill="#444" stroke="none"/>
<path d="M1426 592L1428 594H1433V590H1428ZM1434 590.5H1435.5V596.5H1428"/>
<rect x="1442.5" y="590.5" width="6.5" height="6.5"/><rect x="1444.5" y="592.5" width="2.5" height="2.5" fill="#bbb"/>
<path d="M1457 591.5H1464M1458 591.5V597.5H1463V591.5M1459 591.5V590.5H1462V591.5"/>
</g>

<!-- status bar -->
<rect y="590" width="1266" height="10" fill="#4e4e4e"/><rect x="0" y="590" width="2.6" height="10" fill="#484848"/><rect x="2.6" y="590" width=".8" height="10" fill="#3c3c3c"/>
<rect x="3.4" y="590" width="23" height="10" fill="#535353"/>
<rect x="28" y="590.5" width="30" height="9.5" fill="#484848"/>
<text x="30" y="597.5" style="font-family:'Liberation Serif',serif;font-size:7.5px;fill:#c4c4c4;letter-spacing:.3px">33.33%</text>
<path d="M61 594.5L63 596.5L65 594.5M118.5 594.5L120.5 596.5L122.5 594.5" fill="none" stroke="#c8c8c8"/>
<path d="M73.5 593V597.5M77.5 593L75 595.3L77.5 597.5M87 593L84.5 595.3L87 597.5M132 593L134.5 595.3L132 597.5M141 593L143.5 595.3L141 597.5M145 593V597.5" fill="none" stroke="#777" stroke-width=".9"/>
<rect x="90" y="590.5" width="26" height="9.5" fill="#484848"/>
<text x="94" y="597.5" style="font-family:'Liberation Serif',serif;font-size:7.5px;fill:#c4c4c4">1</text>
<path d="M150.5 590V600M267 590V600" stroke="#444"/>
<text x="201.5" y="598.5" style="fill:#b0b0b0">选择</text>
<path d="M270 592.5L273 595L270 597.5Z" fill="#c8c8c8"/>
<path d="M283 592.5L280.5 595L283 597.5" fill="none" stroke="#999"/>
<rect x="712" y="591" width="16" height="7.5" rx="3" fill="#767676"/>
</svg>
</body></html>
